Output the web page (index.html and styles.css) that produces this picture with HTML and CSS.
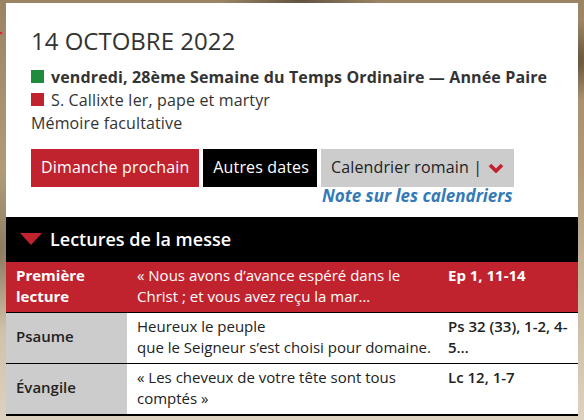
FILE: index.html
```html
<!DOCTYPE html>
<html lang="fr">
<head>
<meta charset="utf-8">
<title>14 octobre 2022</title>
<link rel="stylesheet" href="styles.css">
</head>
<body>
<div class="page">
  <span class="edge-mark"></span>
  <div class="panel">
    <div class="head">
      <h1 class="date">14 OCTOBRE 2022</h1>
      <p class="line strong"><span class="sq green"></span>vendredi, 28ème Semaine du Temps Ordinaire — Année Paire</p>
      <p class="line"><span class="sq red"></span>S. Callixte Ier, pape et martyr</p>
      <p class="line">Mémoire facultative</p>
      <div class="actions">
        <a class="btn btn-red">Dimanche prochain</a>
        <a class="btn btn-black">Autres dates</a>
        <div class="cal">
          <a class="btn btn-gray">Calendrier romain |<svg class="chev" width="16" height="10" viewBox="0 0 16 10"><path d="M2 2 L8 8 L14 2" fill="none" stroke="#c1232e" stroke-width="3.6" stroke-linecap="butt" stroke-linejoin="miter"/></svg></a>
          <a class="note">Note sur les calendriers</a>
        </div>
      </div>
    </div>
    <div class="bar"><span class="tri"></span>Lectures de la messe</div>
    <table class="readings">
      <colgroup><col class="c1"><col class="c2"><col class="c3"></colgroup>
      <tr class="first">
        <td class="kind">Première lecture</td>
        <td class="text">« Nous avons d’avance espéré dans le Christ ; et vous avez reçu la mar…</td>
        <td class="ref">Ep 1, 11-14</td>
      </tr>
      <tr>
        <td class="kind">Psaume</td>
        <td class="text">Heureux le peuple<br>que le Seigneur s’est choisi pour domaine.</td>
        <td class="ref">Ps 32 (33), 1-2, 4-5…</td>
      </tr>
      <tr class="last">
        <td class="kind">Évangile</td>
        <td class="text">« Les cheveux de votre tête sont tous comptés »</td>
        <td class="ref">Lc 12, 1-7</td>
      </tr>
    </table>
  </div>
</div>
</body>
</html>
```

FILE: styles.css
```css
* { box-sizing: border-box; }
html, body { margin: 0; padding: 0; }
body {
  width: 584px;
  height: 420px;
  overflow: hidden;
  font-family: "Open Sans", "Liberation Sans", sans-serif;
  color: #333;
  background:
    radial-gradient(ellipse 60px 40px at 570px 60px, rgba(70,55,35,0.7), rgba(70,55,35,0) 100%),
    radial-gradient(ellipse 80px 30px at 300px 0px, rgba(60,50,40,0.6), rgba(60,50,40,0) 100%),
    radial-gradient(ellipse 40px 80px at 0px 250px, rgba(90,70,45,0.5), rgba(90,70,45,0) 100%),
    linear-gradient(180deg, #9a8464 0%, #b09a78 40%, #cdbfa6 75%, #ddd2bf 100%);
}
.page {
  position: relative;
  padding: 3px 6px 0 6px;
}
.edge-mark {
  position: absolute;
  left: -5px;
  top: 29px;
  width: 0;
  height: 0;
  border-top: 4px solid transparent;
  border-bottom: 4px solid transparent;
  border-left: 8px solid #d42030;
}
.panel {
  width: 572px;
  background: #fff;
}
.head {
  padding: 21px 0 0 25px;
}
.date {
  margin: 0 0 9px 0;
  font-size: 24px;
  font-weight: 400;
  line-height: 33px;
  color: #333;
}
.line {
  margin: 0;
  font-size: 16px;
  line-height: 22.86px;
  letter-spacing: 0.14px;
  color: #333;
}
.line.strong { font-weight: 700; }
.sq {
  display: inline-block;
  width: 13px;
  height: 13px;
  margin-right: 7px;
}
.sq.green { background: #1e8c3c; }
.sq.red { background: #c1232e; }
.actions {
  display: flex;
  gap: 4px;
  margin-top: 14px;
  align-items: flex-start;
}
.btn {
  display: flex;
  align-items: center;
  height: 38px;
  padding: 0 10px 2px 10px;
  font-size: 16px;
  line-height: 36px;
  letter-spacing: 0.14px;
  white-space: nowrap;
}
.btn-red { background: #c1232e; color: #fff; }
.btn-black { background: #000; color: #fff; padding-right: 8px; }
.btn-gray { background: #ccc; color: #222; padding-right: 10px; }
.chev { margin-left: 6px; margin-top: 2px; }
.cal {
  display: flex;
  flex-direction: column;
}
.note {
  display: block;
  padding-left: 1px;
  font-size: 17px;
  line-height: 18px;
  font-weight: 700;
  font-style: italic;
  color: #337ab7;
}
.bar {
  display: flex;
  align-items: center;
  height: 45px;
  margin-top: 12px;
  padding: 0 0 1px 14px;
  background: #000;
  color: #fff;
  font-size: 18px;
  font-weight: 600;
  line-height: 44px;
}
.tri {
  width: 0;
  height: 0;
  border-left: 11px solid transparent;
  border-right: 11px solid transparent;
  border-top: 12px solid #c1232e;
  margin-right: 8px;
}
.readings {
  width: 572px;
  border-collapse: collapse;
  table-layout: fixed;
  font-size: 15px;
  line-height: 21px;
}
.c1 { width: 121px; }
.c2 { width: 311px; }
.c3 { width: 140px; }
.readings td {
  padding: 3px 10px 5px 10px;
  border-bottom: 1px solid #000;
  vertical-align: top;
  color: #222;
}
.readings td.text { padding-right: 2px; }
.readings tr.last td { border-bottom-width: 2px; }
.readings td.kind {
  vertical-align: middle;
  font-weight: 600;
  background: #ccc;
}
.readings td.ref { font-weight: 600; }
.readings tr.first td {
  background: #c1232e;
  color: #fff;
}
.readings tr.first td.kind { font-weight: 700; vertical-align: top; }
.readings tr.first td.ref { font-weight: 700; }
```
